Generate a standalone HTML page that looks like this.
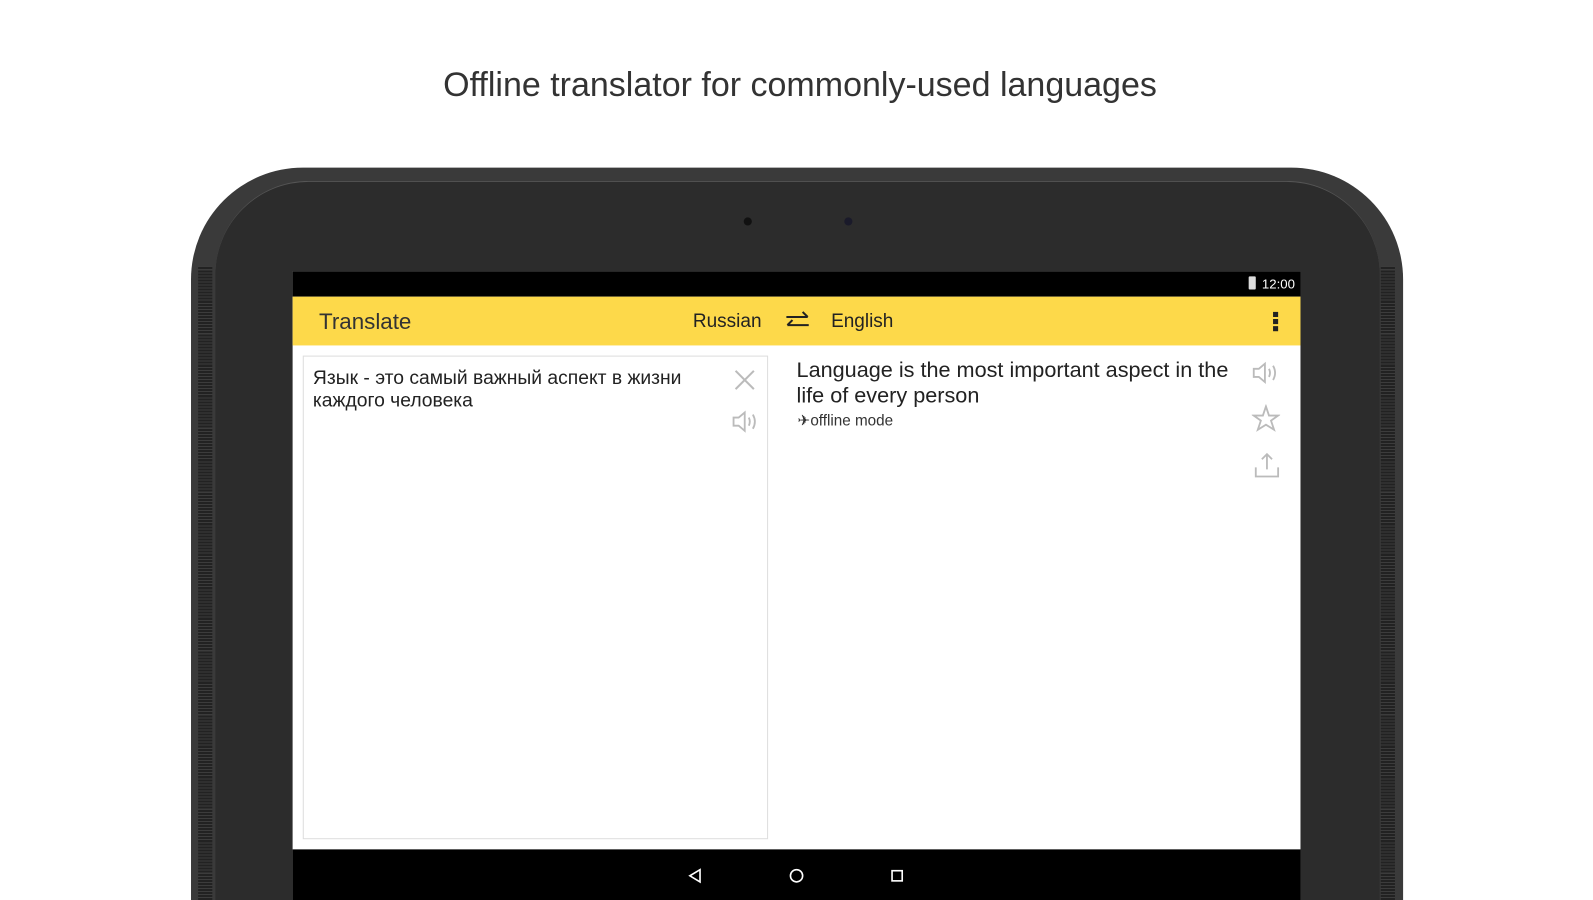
<!DOCTYPE html>
<html style="width:1593px;height:900px;overflow:hidden"><head><meta charset="utf-8"><style>
*{margin:0;padding:0;box-sizing:border-box}
body{width:1593px;height:900px;background:#fff;position:relative;overflow:hidden;font-family:"Liberation Sans",sans-serif}
.title{position:absolute;top:66px;left:0;width:1600px;text-align:center;font-size:34px;color:#333}
.clip{position:absolute;left:0;top:0;width:1593px;height:900px;overflow:hidden}
.wrap{position:absolute;left:0;top:0;width:1568px;height:886px;transform:scale(1.016);transform-origin:0 0}
.outer{position:absolute;left:188px;top:165px;width:1193px;height:721px;background:#3a3a3a;border-radius:110px 110px 0 0}
.inner{position:absolute;left:212px;top:178px;width:1146px;height:708px;background:#2c2c2c;border-radius:92px 92px 0 0;border-top:1px solid #555}
.grill{position:absolute;top:262px;width:14px;height:624px;background:repeating-linear-gradient(0deg,#222 0 2px,#3c3c3c 2px 3px)}
.cam{position:absolute;width:8px;height:8px;border-radius:50%;background:#111}
.screen{position:absolute;left:288px;top:267px;width:992px;height:619px;background:#fff}
.status{position:absolute;left:0;top:0;width:992px;height:25px;background:#000;color:#fff;font-size:13px}
.bar{position:absolute;left:0;top:25px;width:992px;height:48px;background:#fdd94a}
.nav{position:absolute;left:0;top:569px;width:992px;height:50px;background:#000}
.t{position:absolute;white-space:nowrap}
</style></head><body>
<div class="title">Offline translator for commonly-used languages</div>
<div class="clip">
<div class="wrap">
<div class="outer"></div>
<div class="inner"></div>
<div class="grill" style="left:195px"></div>
<div class="grill" style="left:1359px"></div>
<div class="cam" style="left:732px;top:214px"></div>
<div class="cam" style="left:831px;top:214px;background:#1a1a2a"></div>
<div class="screen">
 <div class="status"><div class="t" style="left:941px;top:5px;width:7px;height:13px;background:#ddd;border-radius:1px"></div><div class="t" style="left:954px;top:5px">12:00</div></div>
 <div class="bar">
  <div class="t" style="left:26px;top:12px;font-size:22px;color:#333">Translate</div>
  <div class="t" style="left:394px;top:13px;font-size:18.7px;color:#222">Russian</div>
  <svg class="t" style="left:484px;top:13px" width="26" height="22" viewBox="0 0 26 22" fill="none" stroke="#222" stroke-width="2"><path d="M2 7H23M18 2L23 7M24 15H3M8 10L3 15"/></svg>
  <div class="t" style="left:530px;top:13px;font-size:18.7px;color:#222">English</div>
  <div class="t" style="left:965px;top:15px;width:5px;height:5px;background:#222;box-shadow:0 7px #222,0 14px #222"></div>
 </div>
 <div class="t" style="left:10px;top:83px;width:458px;height:476px;border:1px solid #ddd"></div>
 <div class="t" style="left:20px;top:95px;font-size:19px;line-height:22px;color:#222">Язык - это самый важный аспект в жизни<br>каждого человека</div>
 <svg class="t" style="left:434px;top:96px" width="22" height="22" stroke="#bbb" stroke-width="2"><path d="M2 2L20 20M20 2L2 20"/></svg>
 <svg class="t" style="left:432px;top:136px" width="28" height="24" fill="none" stroke="#bbb" stroke-width="1.8"><path d="M2 8H7L13 3V21L7 16H2Z"/><path d="M17 8Q19 12 17 16M21 5Q25 12 21 19"/></svg>
 <div class="t" style="left:496px;top:85px;font-size:21.3px;line-height:25px;color:#222">Language is the most important aspect in the<br>life of every person</div>
 <div class="t" style="left:497px;top:138px;font-size:15px;color:#333">✈offline mode</div>
 <svg class="t" style="left:944px;top:88px" width="28" height="24" fill="none" stroke="#bbb" stroke-width="1.8"><path d="M2 8H7L13 3V21L7 16H2Z"/><path d="M17 8Q19 12 17 16M21 5Q25 12 21 19"/></svg>
 <svg class="t" style="left:944px;top:131px" width="28" height="28" fill="none" stroke="#bbb" stroke-width="1.8"><path d="M14 2L17 11H26L19 16L22 25L14 20L6 25L9 16L2 11H11Z"/></svg>
 <svg class="t" style="left:946px;top:178px" width="26" height="26" fill="none" stroke="#bbb" stroke-width="1.8"><path d="M13 2V17M8 7L13 2L18 7M2 15V24H24V15"/></svg>
 <div class="nav">
  <svg class="t" style="left:388px;top:18px" width="16" height="16" fill="none" stroke="#fff" stroke-width="1.6"><path d="M13 2V14L3 8Z"/></svg>
  <svg class="t" style="left:488px;top:18px" width="16" height="16" fill="none" stroke="#fff" stroke-width="1.6"><circle cx="8" cy="8" r="6"/></svg>
  <svg class="t" style="left:587px;top:18px" width="16" height="16" fill="none" stroke="#fff" stroke-width="1.6"><rect x="3" y="3" width="10" height="10"/></svg>
 </div>
</div>
</div>
</div>
</body></html>
